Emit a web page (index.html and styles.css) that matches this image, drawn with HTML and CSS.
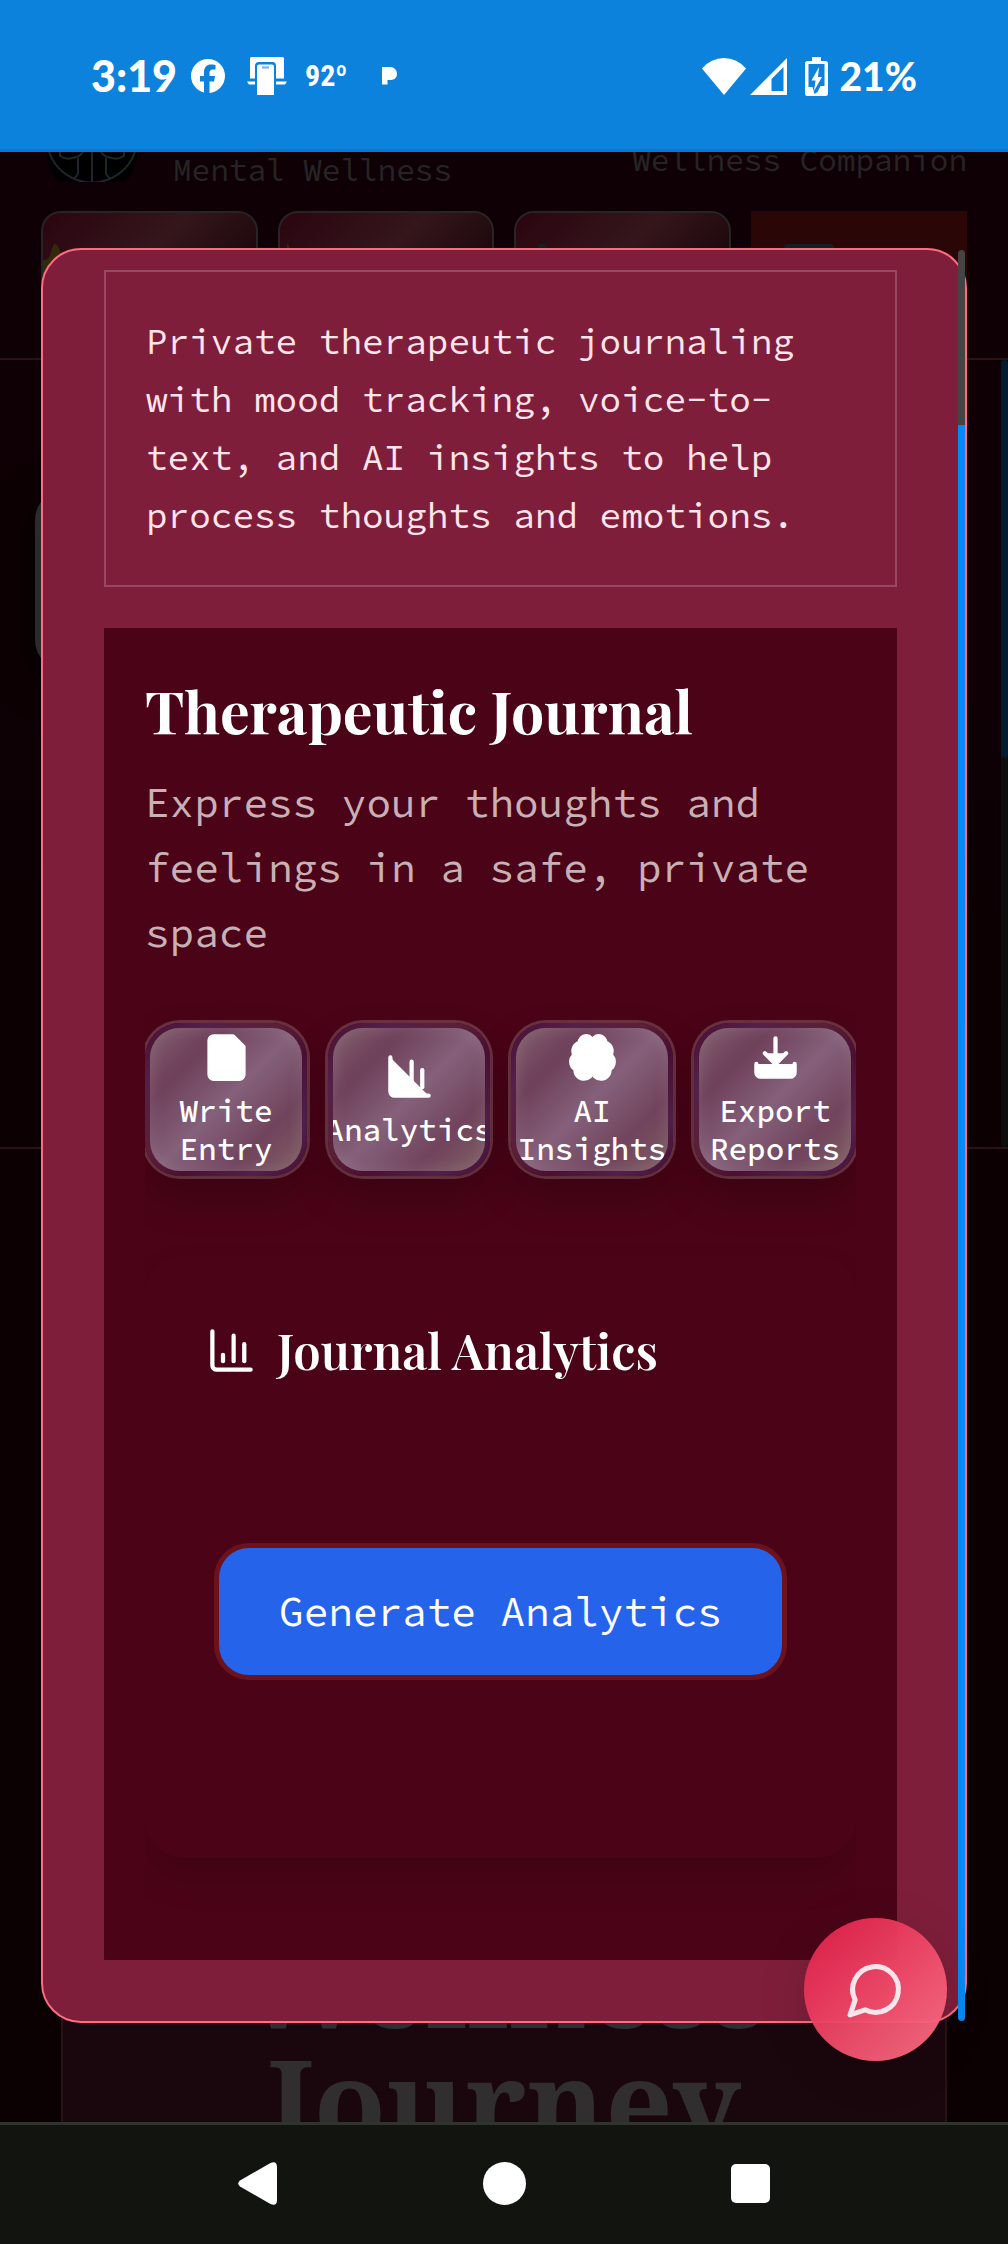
FILE: index.html
```html
<!DOCTYPE html>
<html lang="en">
<head>
<meta charset="utf-8">
<meta name="viewport" content="width=device-width, initial-scale=1">
<title>Therapeutic Journal</title>
<link rel="stylesheet" href="styles.css">
</head>
<body>
<div class="app">
  <header class="status">
    <div class="status-left">
      <span class="clock">3:19</span>
      <svg class="ic-facebook" width="34" height="34" viewBox="0 0 34 34" aria-hidden="true"><circle cx="17" cy="17" r="17" fill="#fff"/><path d="M13 34V22.500H9V17h4v-3.500C13 8 16 5.500 20 5.500c2.500 0 4.500.5 4.500.5v4.500H22c-2.500 0-3.500 1.300-3.500 3.200V17h5.500l-.9 5.500h-4.600V34z" fill="#0d82dc"/></svg>
      <svg class="ic-devices" width="40" height="38" viewBox="0 0 40 38" aria-hidden="true"><path d="M3 1.500q0-1.500 1.500-1.500h31q1.500 0 1.500 1.500V21.500H29V9q0-4-3.500-4H12Q8 5 8 9V21.500H3zM0 24.500h8v3H2zM29 24.500h11l-2 3h-9z" fill="#fff"/><path d="M10 9.500q0-2 2-2h13q2 0 2 2V38H10z" fill="#fff"/><path d="M15 9.500h7v2h-7z" fill="#6cb0e8"/></svg>
      <span class="temperature">92º</span>
      <svg width="16" height="18" viewBox="0 0 16 18" aria-hidden="true"><path d="M1 0h8.500A6.500 6.500 0 0 1 16 6.500C16 11 13 13 9.500 13H6.500v4.500H1z" fill="#fff"/></svg>
    </div>
    <div class="status-right">
      <svg width="44" height="37" viewBox="0 0 44 37" aria-hidden="true"><path d="M0 10.500Q9 0 22 0t22 10.500L22 37z" fill="#fff"/></svg>
      <svg class="ic-signal" width="37" height="37" viewBox="0 0 37 37" aria-hidden="true"><path fill-rule="evenodd" d="M37 0v37H0zM33.500 9L21.500 21v12h12z" fill="#fff"/></svg>
      <svg class="ic-battery" width="23" height="39" viewBox="0 0 23 39" aria-hidden="true"><path d="M7 0h9v4h4.500Q23 4 23 6.500v30q0 2.500-2.500 2.500h-18Q0 39 0 36.500v-30Q0 4 2.500 4H7z" fill="#fff"/><path d="M3.500 7h16v22h-4l-3 6-3 2-2-7h-4z" fill="#0d82dc"/><path d="M14 10L6.500 23.500h4L9 34l8-14h-4z" fill="#fff"/></svg>
      <span class="percent">21%</span>
    </div>
  </header>

  <main class="stage">
    <div class="page" aria-hidden="true">
      <div class="site-header">
        <div class="brand-row">
          <svg width="90" height="30" viewBox="0 0 90 30"><path d="M0 0a45 45 0 0 0 90 0z" fill="#000"/><g fill="none" stroke="#1b272c" stroke-width="2"><path d="M2 0a45.500 45.500 0 0 0 86 0M45 0v30M13 0v4q6 4 12 2 8-1 11-6M77 0v4q-6 4-12 2-8-1-11-6M31 6v16l-4 5M59 6v16l4 5"/></g></svg>
          <span class="brand-name">Mental Wellness</span>
          <span class="brand-tag">Wellness Companion</span>
        </div>
        <div class="quick-cards">
          <div class="quick-card"><svg width="44" height="44" viewBox="0 0 44 44"><path d="M12 0q3 0 5 8t5 9l18 1-15 11 5 15-18-10-20 10 6-15-18-12 22-1q4 0 6-8t4-8z" fill="#332a0c"/></svg></div>
          <div class="quick-card"><svg width="44" height="44" viewBox="0 0 44 44"><path d="M7 0l2 1v40h-3z" fill="#332a0c"/></svg></div>
          <div class="quick-card"><svg width="44" height="44" viewBox="0 0 44 44"><rect x="22" width="9" height="12" rx="2" fill="#151e22"/></svg></div>
          <div class="quick-card quick-card-alert"><svg width="88" height="44" viewBox="0 0 88 44"><rect x="33" width="50" height="12" rx="4" fill="#151e22"/></svg></div>
        </div>
      </div>
      <div class="hero">
        <div class="hero-tab"></div>
        <div class="hero-scroll"><div class="hero-thumb"></div></div>
      </div>
      <div class="intro">
        <div class="intro-card"><h2 class="intro-title">Wellness Journey</h2></div>
      </div>
    </div>

    <section class="modal" role="dialog" aria-labelledby="journal-title">
      <p class="summary">Private therapeutic journaling with mood tracking, voice-to-text, and AI insights to help process thoughts and emotions.</p>

      <div class="journal">
        <h1 class="journal-title" id="journal-title">Therapeutic Journal</h1>
        <p class="journal-lead">Express your thoughts and feelings in a safe, private space</p>

        <div class="workspace">
          <div class="tabs">
            <button class="tab" type="button">
              <svg class="tab-icon" viewBox="0 0 24 24" aria-hidden="true"><path d="M15 2H6a2 2 0 0 0-2 2v16a2 2 0 0 0 2 2h12a2 2 0 0 0 2-2V7z"/></svg>
              <span>Write Entry</span>
            </button>
            <button class="tab" type="button">
              <svg class="tab-icon" viewBox="0 0 24 24" aria-hidden="true"><path d="M3 3v16a2 2 0 0 0 2 2h16"/><path d="M18 17V9"/><path d="M13 17V5"/><path d="M8 17v-3"/></svg>
              <span>Analytics</span>
            </button>
            <button class="tab" type="button">
              <svg class="tab-icon" viewBox="0 0 24 24" aria-hidden="true"><path d="M12 5a3 3 0 1 0-5.997.125 4 4 0 0 0-2.526 5.770 4 4 0 0 0 .556 6.588A4 4 0 1 0 12 18Z"/><path d="M12 5a3 3 0 1 1 5.997.125 4 4 0 0 1 2.526 5.770 4 4 0 0 1-.556 6.588A4 4 0 1 1 12 18Z"/></svg>
              <span>AI Insights</span>
            </button>
            <button class="tab" type="button">
              <svg class="tab-icon" viewBox="0 0 24 24" aria-hidden="true"><path d="M21 15v4a2 2 0 0 1-2 2H5a2 2 0 0 1-2-2v-4"/><path d="M7 10l5 5 5-5"/><path d="M12 15V3"/></svg>
              <span>Export Reports</span>
            </button>
          </div>

          <div class="panel">
            <h2 class="panel-title">
              <svg class="panel-icon" viewBox="0 0 24 24" aria-hidden="true"><path d="M3 3v16a2 2 0 0 0 2 2h16"/><path d="M18 17V9"/><path d="M13 17V5"/><path d="M8 17v-3"/></svg>
              <span>Journal Analytics</span>
            </h2>
            <div class="panel-body">
              <button class="generate" type="button">Generate Analytics</button>
            </div>
          </div>
        </div>
      </div>
      <div class="modal-scroll" aria-hidden="true"><div class="modal-thumb"></div></div>
    </section>

    <button class="chat" type="button" aria-label="Open chat">
      <svg class="chat-icon" viewBox="0 0 24 24" aria-hidden="true"><path d="M7.900 20A9 9 0 1 0 4 16.100L2 22Z"/></svg>
    </button>
  </main>

  <nav class="navbar" aria-label="System">
    <button class="nav-button" type="button" aria-label="Back"><svg width="43" height="43" viewBox="0 0 43 43"><path d="M33 1.200Q39.500-2 40 4.500v34q-.5 6.500-7 3.300L3 24.500Q-.5 21.500 3 18.500z" fill="#fff"/></svg></button>
    <button class="nav-button" type="button" aria-label="Home"><svg width="43" height="43" viewBox="0 0 43 43"><circle cx="21.500" cy="21.500" r="21.500" fill="#fff"/></svg></button>
    <button class="nav-button" type="button" aria-label="Recents"><svg width="43" height="43" viewBox="0 0 43 43"><rect x="2" y="2" width="39" height="39" rx="5" fill="#fff"/></svg></button>
  </nav>
</div>
</body>
</html>
```
FILE: styles.css
```css
:root {
  --mono: "Source Code Pro", "Noto Sans Mono CJK SC", "Liberation Mono", monospace;
  --display: "Playfair Display", "Liberation Serif", serif;
  --rose-deep: #4b0417;
  --rose: #7e1e3a;
}

* { box-sizing: border-box; }

body {
  margin: 0;
  background: #0f0005;
  color: #fff;
  font-family: var(--mono);
}

h1, h2, p { margin: 0; }

button {
  margin: 0;
  padding: 0;
  border: 0;
  background: none;
  color: inherit;
  font-family: inherit;
}

svg { display: block; flex: none; }

.app {
  display: grid;
  grid-template-columns: minmax(0, 1fr);
  grid-template-rows: auto 1fr auto;
  min-height: 100vh;
}

/* System status bar */
.status {
  display: flex;
  justify-content: space-between;
  align-items: center;
  height: 152px;
  padding: 3px 91px 0;
  border-bottom: 3px solid #0b78cc;
  background: #0d82dc;
  font-family: Lato, sans-serif;
  font-weight: 900;
}

.status-left, .status-right { display: flex; align-items: center; }
.clock { font-size: 43px; line-height: 48px; }
.percent { font-size: 39px; line-height: 48px; }
.ic-facebook { margin-left: 14px; }
.ic-devices { margin: 0 18px 0 22px; }
.temperature {
  margin-right: 33px;
  font: bold 30px/40px "Roboto Condensed", Roboto, sans-serif;
}
.ic-signal { margin: 0 18px 0 4px; }
.ic-battery { margin-right: 12px; }

.stage {
  position: relative;
  padding: 96px 41px 99px;
}

/* Dimmed page behind the dialog */
.page {
  position: absolute;
  inset: 0;
  display: flex;
  flex-direction: column;
  overflow: hidden;
  background: linear-gradient(#0f0005, #0b0002);
}

.site-header {
  flex: none;
  height: 208px;
  padding: 0 41px;
  overflow: hidden;
  border-bottom: 2px solid #2b1216;
  font-size: 31px;
  line-height: 35px;
  color: #262425;
}

.brand-row { display: flex; align-items: flex-start; height: 59px; padding-left: 6px; }
.brand-name { margin-left: 36px; }
.brand-tag { margin: -10px 0 0 auto; }

.quick-cards { display: grid; grid-template-columns: repeat(4, minmax(0, 1fr)); gap: 20px; }
.quick-card {
  height: 200px;
  padding-top: 31px;
  overflow: hidden;
  border: 2px solid #262425;
  border-radius: 20px;
  background: linear-gradient(135deg, #2b0510, #34161b 36%, #1c070b 64%);
}
.quick-card-alert { border: 0; border-radius: 0; background: #2b0606; padding-top: 33px; }

.hero { position: relative; flex: none; height: 789px; border-bottom: 2px solid #2b1216; }
.hero-tab {
  position: absolute;
  left: 35px;
  top: 130px;
  width: 60px;
  height: 180px;
  border-radius: 30px;
  background: #2b2b2b;
  box-shadow: 0 10px 40px #000;
}
.hero-scroll { position: absolute; right: 0; top: 0; bottom: 0; width: 7px; background: #0b0e0c; border-radius: 4px; }
.hero-thumb { height: 398px; border-radius: 4px; background: #001a30; }

.intro { flex: 1; display: flex; padding: 200px 61px 0; }
.intro-card {
  flex: 1;
  padding: 573px 160px 0;
  border: 2px solid #2b1216;
  border-bottom: 0;
  background: #1a070d;
}
.intro-title {
  color: #302e2f;
  font: bold 118px/118px "Noto Serif", "DejaVu Serif", serif;
  text-align: center;
}

/* Dialog */
.modal {
  position: relative;
  padding: 20px 68px 61px 61px;
  border: 2px solid #ff6b81;
  border-radius: 40px;
  background: var(--rose);
}

.summary {
  margin-bottom: 41px;
  padding: 41px 40px 40px;
  border: 2px solid #984863;
  color: #ffe4ec;
  font-size: 36px;
  line-height: 58px;
}

.journal { padding: 41px 41px 0; background: var(--rose-deep); }

.journal-title {
  margin-bottom: 19px;
  font: bold 59px/82px var(--display);
}

.journal-lead {
  color: #c9b0b6;
  font-size: 41px;
  line-height: 65px;
}

.workspace { overflow: hidden; padding: 58px 0 102px; }

.tabs { display: grid; grid-template-columns: repeat(4, minmax(0, 1fr)); gap: 21px; }

.tab {
  display: flex;
  flex-direction: column;
  align-items: center;
  justify-content: center;
  gap: 9px;
  height: 153px;
  overflow: hidden;
  border: 5px solid transparent;
  border-radius: 35px;
  background:
    linear-gradient(135deg, rgba(125, 90, 104, .9), rgba(110, 64, 90, .1) 20%, rgba(110, 64, 90, 0) 80%, rgba(125, 95, 98, .6)) padding-box,
    linear-gradient(135deg, #7c5268, #6f415b 25%, #86627c 50%, #71445d 75%, #7c5661) padding-box,
    linear-gradient(135deg, #480f30, #54204a 20%, #5a2036 42%, #4a1033 60%, #52204a 82%, #481035) border-box;
  box-shadow:
    0 0 0 3px rgba(255, 255, 255, .18),
    0 20px 41px rgba(0, 0, 0, .22),
    inset 0 0 16px rgba(255, 255, 255, .12);
  font-size: 31px;
  font-weight: 500;
  line-height: 38px;
  text-align: center;
}

.tab-icon { width: 51px; height: 51px; }
.tab-icon, .panel-icon, .chat-icon {
  fill: currentColor;
  stroke: currentColor;
  stroke-width: 2;
  stroke-linecap: round;
  stroke-linejoin: round;
}
.panel-icon, .chat-icon { fill: none; }

.panel {
  margin-top: 80px;
  padding: 61px;
  border-radius: 40px;
  box-shadow: 0 20px 41px -5px rgba(0, 0, 0, .16);
}

.panel-title {
  display: flex;
  align-items: center;
  gap: 20px;
  font: 600 49px/66px var(--display);
}
.panel-icon { width: 51px; height: 51px; }

.panel-body { display: flex; justify-content: center; padding: 160px 0 117px; }

.generate {
  padding: 31px 60px;
  border: 5px solid #6b121d;
  border-radius: 35px;
  background: #2563eb;
  font-size: 41px;
  line-height: 65px;
  white-space: nowrap;
}

.modal-scroll {
  position: absolute;
  top: 0;
  right: 0;
  bottom: 0;
  width: 7px;
  border-radius: 4px;
  background: #444;
}
.modal-thumb { height: 100%; border-top: 175px solid transparent; border-radius: 4px; background: #058af5 padding-box; }

.chat {
  position: absolute;
  right: 61px;
  bottom: 61px;
  display: flex;
  align-items: center;
  justify-content: center;
  width: 143px;
  height: 143px;
  border-radius: 50%;
  background: linear-gradient(135deg, #e11d48, #fb7185);
  box-shadow: 0 10px 50px rgba(0, 0, 0, .12);
  color: #fff;
  opacity: .95;
}
.chat-icon { width: 61px; height: 61px; color: #fff0f5; }

/* System navigation bar */
.navbar {
  position: relative;
  display: flex;
  justify-content: center;
  align-items: center;
  gap: 203px;
  height: 122px;
  padding-bottom: 3px;
  border-top: 3px solid #30342e;
  background: #11140f;
}
.nav-button { display: block; }
```
